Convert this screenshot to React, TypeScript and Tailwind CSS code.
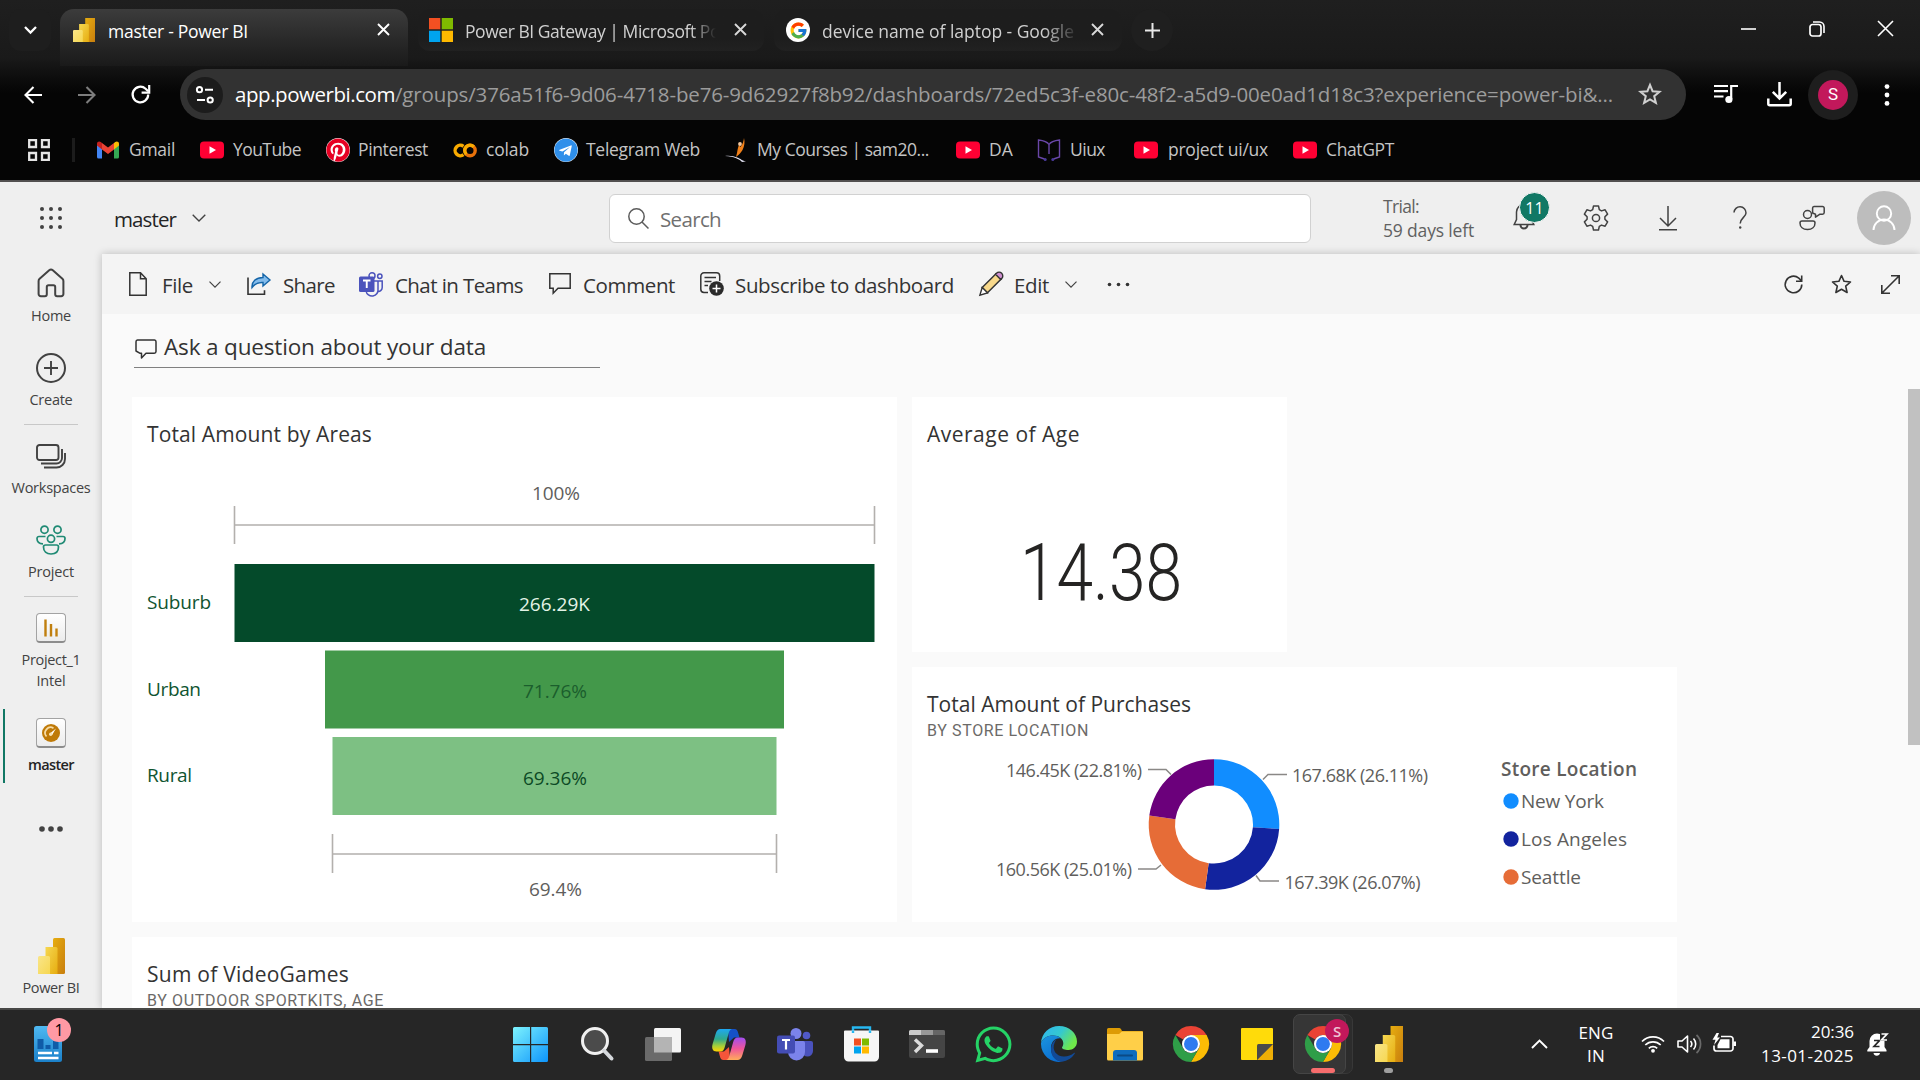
import { useId, useLayoutEffect, useRef, useState, type ReactNode } from 'react';
import { FaPinterest, FaTelegram, FaWhatsapp } from 'react-icons/fa';
import { FcGoogle } from 'react-icons/fc';

/* Text set to a fixed measure: the tracking is computed from the rendered width. */
function Fit({ w, className = '', children }: { w: number; className?: string; children: string }) {
  const ref = useRef<HTMLSpanElement>(null);
  const [spacing, setSpacing] = useState(0);
  useLayoutEffect(() => {
    const el = ref.current;
    if (el) setSpacing((w - el.getBoundingClientRect().width) / children.length);
  }, [w, children]);
  return (
    <span ref={ref} className={`inline-block shrink-0 whitespace-nowrap ${className}`} style={{ letterSpacing: `${spacing}px` }}>
      {children}
    </span>
  );
}

function Svg({ w, h, vb, className = '', children }: { w: number; h: number; vb: string; className?: string; children: ReactNode }) {
  return (
    <svg width={w} height={h} viewBox={vb} fill="none" className={`shrink-0 overflow-visible ${className}`}>
      {children}
    </svg>
  );
}

/* ---------- shared logos ---------- */

function PowerBiLogo({ w, h, flat = false }: { w: number; h: number; flat?: boolean }) {
  const id = useId();
  return (
    <svg width={w} height={h} viewBox="0 0 27 36" preserveAspectRatio="none" className="shrink-0">
      <defs>
        <linearGradient id={`${id}a`} x1="0" y1="0" x2="1" y2="1">
          <stop stopColor="#e6ad10" />
          <stop offset="1" stopColor="#c87e0e" />
        </linearGradient>
        <linearGradient id={`${id}b`} x1="0" y1="0" x2="1" y2="1">
          <stop stopColor="#f6d751" />
          <stop offset="1" stopColor="#e6ad10" />
        </linearGradient>
        <linearGradient id={`${id}c`} x1="0" y1="0" x2="1" y2="1">
          <stop stopColor="#f9e589" />
          <stop offset="1" stopColor="#f6d751" />
        </linearGradient>
      </defs>
      <rect x="15" width="12" height="36" rx={flat ? 0 : 1.5} fill={`url(#${id}a)`} />
      <path d="M7.5 9h10.5a1.5 1.5 0 0 1 1.5 1.5V36H7.5z" fill={`url(#${id}b)`} />
      <path d="M1.5 18h9a1.5 1.5 0 0 1 1.5 1.5V36H0V19.5A1.5 1.5 0 0 1 1.5 18z" fill={`url(#${id}c)`} />
    </svg>
  );
}

function ChromeLogo() {
  return (
    <Svg w={36} h={36} vb="0 0 48 48">
      <path d="M24 0a24 24 0 0 1 20.8 12H24a12 12 0 0 0-10.4 6L3.2 12A24 24 0 0 1 24 0z" fill="#ea4335" />
      <path d="M44.8 12A24 24 0 0 1 24 48l10.4-18A12 12 0 0 0 34.4 18L31 12z" fill="#fbbc05" />
      <path d="M3.2 12A24 24 0 0 0 24 48l10.4-18A12 12 0 0 1 13.6 30z" fill="#2f9e48" />
      <path d="M24 12h20.8L34 20z" fill="#fbbc05" />
      <circle cx="24" cy="24" r="12" fill="#fff" />
      <circle cx="24" cy="24" r="9.3" fill="#2f7af0" />
    </Svg>
  );
}

const CloseX = ({ bright = false }: { bright?: boolean }) => (
  <Svg w={13} h={13} vb="0 0 13 13">
    <path d="M1 1l11 11M12 1L1 12" stroke={bright ? '#fff' : '#d8d8d8'} strokeWidth="1.9" />
  </Svg>
);

const Chevron = ({ w = 12, color = '#424242' }: { w?: number; color?: string }) => (
  <Svg w={w} h={w / 2 + 1} vb="0 0 12 7">
    <path d="M.5.7L6 6.2 11.500.7" stroke={color} strokeWidth="1.2" />
  </Svg>
);

/* ---------- browser chrome ---------- */

function TabStrip() {
  return (
    <div className="flex h-[60px] items-start pt-[9px]">
      <div className="ml-[9px] flex h-[42px] w-[42px] items-center justify-center rounded-xl bg-[#1e1e1e]">
        <Svg w={13} h={8} vb="0 0 13 8">
          <path d="M1 1l5.500 5.500L12 1" stroke="#fff" strokeWidth="2.3" />
        </Svg>
      </div>
      <div className="ml-[9px] flex h-[57px] w-[348px] items-start rounded-t-[14px] bg-linear-to-b from-[#3c3c3c] to-[#1a1a1a] pl-[13px]">
        <div className="mt-[9px]">
          <PowerBiLogo w={22} h={24} flat />
        </div>
        <Fit w={140} className="ml-[13px] mt-[10px] text-[17.500px] leading-6 text-white">master - Power BI</Fit>
        <div className="ml-[129px] mt-[14px]"><CloseX bright /></div>
      </div>
      <div className="ml-[10px] flex h-[42px] w-[346px] items-start rounded-xl bg-linear-to-b from-[#1d1d1d] from-70% to-[#212121] pl-[11px]">
        <Svg w={24} h={24} vb="0 0 24 24" className="mt-[9px]">
          <path d="M0 0h11.300v11.300H0z" fill="#f25022" />
          <path d="M12.700 0H24v11.300H12.700z" fill="#7fba00" />
          <path d="M0 12.700h11.300V24H0z" fill="#00a4ef" />
          <path d="M12.700 12.700H24V24H12.700z" fill="#ffb900" />
        </Svg>
        <div className="ml-[12px] mt-[10px] w-[251px] overflow-hidden [mask-image:linear-gradient(to_right,black_90%,transparent)]">
          <Fit w={255} className="text-[17.500px] leading-6 text-[#d0d0d0]">Power BI Gateway | Microsoft Po</Fit>
        </div>
        <div className="ml-[18px] mt-[14px]"><CloseX /></div>
      </div>
      <div className="ml-[10px] flex h-[42px] w-[348px] items-start rounded-xl bg-linear-to-b from-[#1d1d1d] from-70% to-[#212121] pl-[12px]">
        <div className="mt-[9px] flex h-6 w-6 items-center justify-center rounded-full bg-white">
          <FcGoogle size={19} />
        </div>
        <div className="ml-[12px] mt-[10px] w-[252px] overflow-hidden [mask-image:linear-gradient(to_right,black_88%,transparent_102%)]">
          <Fit w={252} className="text-[17.500px] leading-6 text-[#d0d0d0]">device name of laptop - Google</Fit>
        </div>
        <div className="ml-[17px] mt-[14px]"><CloseX /></div>
      </div>
      <div className="ml-[9px] flex h-[42px] w-[42px] items-center justify-center rounded-full bg-[#1f1f1f]">
        <Svg w={15} h={15} vb="0 0 15 15">
          <path d="M7.500 0v15M0 7.500h15" stroke="#e8e8e8" strokeWidth="2" />
        </Svg>
      </div>
      <div className="ml-auto mr-[27px] mt-[12px] flex gap-[53px]">
        <Svg w={15} h={15} vb="0 0 15 15">
          <path d="M0 8h15" stroke="#fff" strokeWidth="1.600" />
        </Svg>
        <Svg w={16} h={16} vb="0 0 16 16">
          <rect x="1" y="3.500" width="11" height="11.500" rx="2.500" stroke="#fff" strokeWidth="1.700" />
          <path d="M4 1h6.500a4.500 4.500 0 0 1 4.500 4.500V12" stroke="#fff" strokeWidth="1.600" />
        </Svg>
        <Svg w={15} h={15} vb="0 0 15 15">
          <path d="M0 0l15 15M15 0L0 15" stroke="#fff" strokeWidth="1.600" />
        </Svg>
      </div>
    </div>
  );
}

function AddressBar() {
  return (
    <div className="flex h-[51px] items-center">
      <Svg w={18} h={18} vb="0 0 18 18" className="ml-[24px]">
        <path d="M18 9H1.500M9.500 1L1.500 9l8 8" stroke="#fff" strokeWidth="2.100" />
      </Svg>
      <Svg w={18} h={18} vb="0 0 18 18" className="ml-[36px]">
        <path d="M0 9h16.500M8.500 1l8 8-8 8" stroke="#7d7d7d" strokeWidth="2.100" />
      </Svg>
      <Svg w={19} h={19} vb="0 0 19 19" className="ml-[35px]">
        <path d="M17.200 9.500a7.800 7.800 0 1 1-2.600-5.800l2.600 2.600" stroke="#fff" strokeWidth="2.200" />
        <path d="M18.200 0v7.600h-7.600" stroke="#fff" strokeWidth="2.200" />
      </Svg>
      <div className="ml-[30px] flex h-[51px] w-[1506px] items-center rounded-full bg-[#323232]">
        <div className="ml-[7px] flex h-[36px] w-[36px] items-center justify-center rounded-full bg-[#1c1c1c]">
          <Svg w={20} h={18} vb="0 0 20 18">
            <g stroke="#fff" strokeWidth="2">
              <circle cx="4.500" cy="3.700" r="2.600" />
              <path d="M10 3.700h8M2 14h8" />
              <circle cx="15.200" cy="14" r="2.600" />
            </g>
          </Svg>
        </div>
        <Fit w={160} className="mb-[2px] ml-[12px] text-[20.500px] leading-8 text-white">app.powerbi.com</Fit>
        <Fit w={1218} className="mb-[2px] text-[20.500px] leading-8 text-[#9c9c9c]">
          /groups/376a51f6-9d06-4718-be76-9d62927f8b92/dashboards/72ed5c3f-e80c-48f2-a5d9-00e0ad1d18c3?experience=power-bi&...
        </Fit>
        <Svg w={24} h={24} vb="0 0 24 24" className="mb-[2px] ml-[25px]">
          <path d="M12 2.800l2.600 6.400 6.900.5-5.300 4.500 1.700 6.700-5.900-3.600-5.900 3.600 1.700-6.700L2.500 9.700l6.900-.5z" stroke="#d0d0d0" strokeWidth="2" />
        </Svg>
      </div>
      <Svg w={24} h={20} vb="0 0 24 20" className="ml-[28px] mt-[-2px]">
        <path d="M0 2h14M0 7.200h14M0 12.500h9.500M24 2h-6.800v13" stroke="#fff" strokeWidth="2.200" />
        <circle cx="14.900" cy="15.500" r="3.600" fill="#fff" />
      </Svg>
      <Svg w={25} h={25} vb="0 0 25 25" className="ml-[29px]">
        <path d="M12.500 0v16M5.800 9.800l6.700 6.700 6.700-6.700M1.300 16.500v5.300a1.500 1.500 0 0 0 1.500 1.500h19.400a1.500 1.500 0 0 0 1.500-1.500v-5.300" stroke="#fff" strokeWidth="2.500" />
      </Svg>
      <div className="ml-[16px] flex h-[50px] w-[50px] items-center justify-center rounded-full bg-[#1e1e1e]">
        <div className="flex h-[30px] w-[30px] items-center justify-center rounded-full bg-[#c2185b] font-[Roboto] text-[17px] text-white">S</div>
      </div>
      <Svg w={6} h={22} vb="0 0 6 22" className="ml-[26px]">
        <g fill="#fff">
          <circle cx="3" cy="2.600" r="2.400" />
          <circle cx="3" cy="11" r="2.400" />
          <circle cx="3" cy="19.400" r="2.400" />
        </g>
      </Svg>
    </div>
  );
}

const YouTubeIcon = () => (
  <Svg w={24} h={18} vb="0 0 24 18">
    <rect y=".5" width="24" height="17" rx="4" fill="#ff0033" />
    <path d="M9.500 5.300v7.400L16 9z" fill="#fff" />
  </Svg>
);

const GmailIcon = () => (
  <Svg w={22} h={18} vb="0 0 22 17">
    <path d="M0 3v12.500A1.500 1.500 0 0 0 1.500 17H5V7z" fill="#4285f4" />
    <path d="M22 3v12.500a1.500 1.500 0 0 1-1.500 1.500H17V7z" fill="#34a853" />
    <path d="M17 1.500V8l5-4V2.200C22 .2 19.800-.7 18.200.5z" fill="#fbbc04" />
    <path d="M5 8V1.500L11 6l6-4.500V8l-6 4.600z" fill="#ea4335" />
    <path d="M0 2.200V4l5 4V1.500L3.800.5C2.200-.7 0 .2 0 2.200z" fill="#c5221f" />
  </Svg>
);

const bookmarks: { label: string; w: number; gap: number; pad: number; icon: ReactNode }[] = [
  { label: 'Gmail', w: 46, gap: 22, pad: 10, icon: <GmailIcon /> },
  { label: 'YouTube', w: 68, gap: 25, pad: 9, icon: <YouTubeIcon /> },
  { label: 'Pinterest', w: 70, gap: 25, pad: 8, icon: <span className="rounded-full bg-white"><FaPinterest size={24} color="#e60023" /></span> },
  {
    label: 'colab', w: 43, gap: 25, pad: 9,
    icon: (
      <Svg w={24} h={15} vb="0 0 24 15">
        <path d="M10.500 3.400A5.200 5.200 0 1 0 10.500 11.600" stroke="#f9ab00" strokeWidth="3.400" />
        <circle cx="17" cy="7.500" r="5.200" stroke="#e8710a" strokeWidth="3.400" />
        <path d="M13.300 11.200a5.200 5.200 0 0 1 7.400-7.400" stroke="#f9ab00" strokeWidth="3.400" />
      </Svg>
    ),
  },
  { label: 'Telegram Web', w: 114, gap: 25, pad: 8, icon: <span className="rounded-full bg-white"><FaTelegram size={24} color="#2f8fea" /></span> },
  {
    label: 'My Courses | sam20...', w: 172, gap: 25, pad: 10,
    icon: (
      <Svg w={22} h={24} vb="0 0 22 24">
        <path d="M19 0c1 4 .5 8-1.500 12-1.200 2.500-4 5-6.500 7l1-4c.5-3 .8-5 2-8l1.500 2C18 6 18.500 3 19 0z" fill="#f08019" />
        <circle cx="15" cy="6" r="1.900" fill="#f3c9a0" />
        <path d="M0 18c4-.6 9 0 13 1.800s5 3.400 8 3.700l-4 .4c-3-2.800-8-5.400-17-5.900z" fill="#e4e4f4" />
      </Svg>
    ),
  },
  { label: 'DA', w: 24, gap: 27, pad: 9, icon: <YouTubeIcon /> },
  {
    label: 'Uiux', w: 35, gap: 24, pad: 9,
    icon: (
      <Svg w={24} h={22} vb="0 0 24 22">
        <path d="M12 5.500C10.500 3 6.500 1.500 1.500 1v17l6 2M12 5.500c1.500-2.500 5.500-4 10.500-4.500v17l-6 2M12 4.500V15" stroke="#6a47a8" strokeWidth="1.400" />
        <circle cx="8.200" cy="20.500" r="1.500" fill="#4a3a9a" />
        <circle cx="15.800" cy="20.500" r="1.500" fill="#4a3a9a" />
      </Svg>
    ),
  },
  { label: 'project ui/ux', w: 100, gap: 29, pad: 10, icon: <YouTubeIcon /> },
  { label: 'ChatGPT', w: 68, gap: 25, pad: 9, icon: <YouTubeIcon /> },
];

function BookmarksBar() {
  return (
    <div className="flex h-[60px] items-center">
      <Svg w={22} h={22} vb="0 0 22 22" className="ml-[28px]">
        <path d="M1.200 1.200h6.800V8H1.200zM14 1.200h6.800V8H14zM1.200 14h6.800v6.800H1.200zM14 14h6.800v6.800H14z" stroke="#e4e4e4" strokeWidth="2.300" />
      </Svg>
      <div className="ml-[22px] h-6 w-[3px] bg-[#1c1c1c]" />
      {bookmarks.map((b, i) => (
        <div key={i} className="flex items-center">
          <span style={{ width: b.gap }} />
          {b.icon}
          <span style={{ width: b.pad }} />
          <Fit w={b.w} className="mb-[2px] text-[17.500px] leading-6 text-[#c4c4c4]">{b.label}</Fit>
        </div>
      ))}
    </div>
  );
}

/* ---------- Power BI header ---------- */

function AppHeader() {
  return (
    <header className="flex h-[74px] shrink-0 items-center border-t-2 border-[#525050] bg-[#efefef]">
      <Svg w={22} h={22} vb="0 0 22 22" className="ml-[40px]">
        <g fill="#424242">
          {[2, 11, 20].map((y) => [2, 11, 20].map((x) => <circle key={`${x}-${y}`} cx={x} cy={y} r="2" />))}
        </g>
      </Svg>
      <Fit w={62} className="ml-[52px] mt-[2px] text-[20.500px] leading-7 text-[#242424]">master</Fit>
      <div className="ml-[16px]"><Chevron w={14} /></div>
      <div className="ml-[403px] flex h-[49px] w-[702px] items-center rounded-[6px] border-[1.500px] border-[#d1d1d1] bg-white">
        <Svg w={21} h={21} vb="0 0 21 21" className="ml-[18px]">
          <circle cx="8.500" cy="8.500" r="7.700" stroke="#5c5c5c" strokeWidth="1.500" />
          <path d="M14 14l6.500 6.500" stroke="#5c5c5c" strokeWidth="1.500" />
        </Svg>
        <Fit w={61} className="ml-[11px] mt-[2px] text-[20.500px] leading-7 text-[#707070]">Search</Fit>
      </div>
      <div className="ml-[72px] flex w-[120px] flex-col text-[17.500px] leading-6 text-[#616161]">
        <Fit w={36} className="self-start">Trial:</Fit>
        <Fit w={91} className="self-start">59 days left</Fit>
      </div>
      <div className="relative ml-[10px] h-[30px] w-[24px]">
        <Svg w={22} h={28} vb="0 0 22 28">
          <path d="M11 1.500A7.500 7.500 0 0 0 3.500 9v7.500L1.200 21.500h19.600l-2.300-5V9A7.500 7.500 0 0 0 11 1.500z" stroke="#424242" strokeWidth="1.500" />
          <path d="M7.500 22a3.500 3.500 0 0 0 7 0" stroke="#424242" strokeWidth="2" />
        </Svg>
        <div className="absolute left-[6px] top-[-11px] flex h-[31px] w-[31px] items-center justify-center rounded-full border-[1.500px] border-[#f4f4f4] bg-[#117865] text-[16px] text-white">
          11
        </div>
      </div>
      <Svg w={26} h={26} vb="0 0 26 26" className="ml-[46px]">
        <path d="M10.500 1h5l.8 3.600 2.200 1.300 3.600-1.100 2.500 4.300-2.700 2.600v2.600l2.700 2.600-2.500 4.300-3.600-1.100-2.200 1.300-.8 3.600h-5l-.8-3.600-2.200-1.300-3.600 1.100-2.500-4.300 2.700-2.600v-2.600L1.400 9.100l2.500-4.300 3.600 1.100 2.200-1.300z" stroke="#424242" strokeWidth="1.500" strokeLinejoin="round" />
        <circle cx="13" cy="13" r="3.600" stroke="#424242" strokeWidth="1.500" />
      </Svg>
      <Svg w={20} h={26} vb="0 0 20 26" className="ml-[49px]">
        <path d="M10 1v19M2 13l8 8 8-8M1 24.700h18" stroke="#424242" strokeWidth="1.500" />
      </Svg>
      <Svg w={14} h={24} vb="0 0 14 24" className="ml-[55px]">
        <path d="M1 6.500A6 6 0 0 1 13 7c0 4-5.800 5-5.800 10.500" stroke="#424242" strokeWidth="1.500" />
        <circle cx="7.200" cy="21.500" r="1.200" fill="#424242" />
      </Svg>
      <Svg w={26} h={26} vb="0 0 26 26" className="ml-[52px]">
        <g stroke="#424242" strokeWidth="1.500" strokeLinejoin="round">
          <circle cx="8.500" cy="9.500" r="4" />
          <path d="M3 16h11a2 2 0 0 1 2 2c0 4-3 6.500-7.500 6.500S1 22 1 18a2 2 0 0 1 2-2zM15 1.500h8.500a1.700 1.700 0 0 1 1.700 1.700v4.300a1.700 1.700 0 0 1-1.700 1.700H21l-4.500 3V9.200L13.600 8V3a1.500 1.500 0 0 1 1.400-1.500z" />
        </g>
      </Svg>
      <div className="ml-[32px] flex h-[54px] w-[54px] items-center justify-center rounded-full bg-[#bdbdbd]">
        <Svg w={24} h={26} vb="0 0 24 26">
          <circle cx="12" cy="8.500" r="7.200" stroke="#fff" strokeWidth="1.900" />
          <path d="M1.500 25a10.500 10.500 0 0 1 21 0" stroke="#fff" strokeWidth="1.900" />
        </Svg>
      </div>
    </header>
  );
}

/* ---------- left navigation ---------- */

function NavLabel({ w, bold = false, className = '', children }: { w: number; bold?: boolean; className?: string; children: string }) {
  return (
    <div className={`flex h-[21px] justify-center ${className}`}>
      <Fit w={w} className={bold ? 'text-[14.500px] font-semibold leading-[21px] text-[#242424]' : 'text-[14.500px] leading-[21px] text-[#424242]'}>
        {children}
      </Fit>
    </div>
  );
}

function Tile({ children }: { children: ReactNode }) {
  return (
    <div className="flex h-[30px] w-[30px] items-center justify-center rounded-[4px] border border-b-2 border-[#a3a3a3] border-b-[#8c8c8c] bg-linear-to-b from-white to-[#ececec]">
      {children}
    </div>
  );
}

function Sidebar() {
  return (
    <nav className="flex w-[102px] shrink-0 flex-col items-center bg-[#efefef]">
      <Svg w={28} h={30} vb="0 0 28 30" className="mt-[14px]">
        <path d="M12.200 2.300a2.700 2.700 0 0 1 3.600 0l9.600 8.500c.7.600 1 1.300 1 2.200V26a2.200 2.200 0 0 1-2.200 2.200h-4a2 2 0 0 1-2-2V19a1.700 1.700 0 0 0-1.700-1.700h-5A1.700 1.700 0 0 0 9.800 19v7.200a2 2 0 0 1-2 2h-4A2.200 2.200 0 0 1 1.600 26V13c0-.9.300-1.600 1-2.200z" stroke="#424242" strokeWidth="2" />
      </Svg>
      <NavLabel w={40} className="mt-[7px]">Home</NavLabel>
      <Svg w={30} h={30} vb="0 0 30 30" className="mt-[27px]">
        <circle cx="15" cy="15" r="14" stroke="#424242" strokeWidth="2" />
        <path d="M15 8v14M8 15h14" stroke="#424242" strokeWidth="1.900" />
      </Svg>
      <NavLabel w={43} className="mt-[6px]">Create</NavLabel>
      <div className="mt-[14px] h-px w-[54px] bg-[#c8c8c8]" />
      <Svg w={30} h={25} vb="0 0 30 25" className="mt-[19px]">
        <rect x="1" y="1" width="21.500" height="15" rx="2.500" stroke="#424242" strokeWidth="1.900" />
        <path d="M5 19.500h15.500a5.500 5.500 0 0 0 5.500-5.500V5M8 23.500h12.500a8.500 8.500 0 0 0 8.500-8.500V9" stroke="#424242" strokeWidth="1.900" />
      </Svg>
      <NavLabel w={79} className="mt-[8px]">Workspaces</NavLabel>
      <Svg w={30} h={30} vb="0 0 30 30" className="mt-[27px]">
        <g stroke="#1f8a74" strokeWidth="1.700">
          <circle cx="8.500" cy="4.700" r="3.600" />
          <circle cx="21.500" cy="4.700" r="3.600" />
          <circle cx="15" cy="13.800" r="3.600" />
          <path d="M9.500 11.500H3A2 2 0 0 0 1 13.500C1 17 3.500 18.800 7 18.800M20.500 11.500H27a2 2 0 0 1 2 2c0 3.500-2.500 5.300-6 5.300M9.500 20h11a2 2 0 0 1 2 2c0 4.500-3 7-7.500 7s-7.500-2.500-7.500-7a2 2 0 0 1 2-2z" />
        </g>
      </Svg>
      <NavLabel w={46} className="mt-[6px]">Project</NavLabel>
      <div className="mt-[14px] h-px w-[54px] bg-[#c8c8c8]" />
      <div className="mt-[16px]">
        <Tile>
          <Svg w={16} h={20} vb="0 0 16 20">
            <path d="M2.500 1.500v17M8 6v12.500M13.500 10.500v8" stroke="#c07f0e" strokeWidth="2.400" />
          </Svg>
        </Tile>
      </div>
      <NavLabel w={59} className="mt-[6px]">Project_1</NavLabel>
      <NavLabel w={29}>Intel</NavLabel>
      <div className="relative mt-[18px] flex h-[74px] w-full flex-col items-center">
        <div className="absolute left-[3px] top-0 h-[74px] w-[2px] bg-[#117865]" />
        <div className="mt-[9px]">
          <Tile>
            <Svg w={18} h={18} vb="0 0 18 18">
              <circle cx="9" cy="9" r="9" fill="#bf7a08" />
              <path d="M4.500 12.500A5.500 5.500 0 0 1 11.500 4.200" stroke="#f7dca6" strokeWidth="1.700" />
              <path d="M14 4.500l-4 6.500-2-1.600z" fill="#fff" />
              <circle cx="8.700" cy="10.200" r="1.700" fill="#f9e3b4" />
            </Svg>
          </Tile>
        </div>
        <NavLabel w={46} bold className="mt-[6px]">master</NavLabel>
      </div>
      <Svg w={24} h={6} vb="0 0 24 6" className="mt-[43px]">
        <g fill="#424242">
          <circle cx="3" cy="3" r="2.800" />
          <circle cx="12" cy="3" r="2.800" />
          <circle cx="21" cy="3" r="2.800" />
        </g>
      </Svg>
      <div className="mt-auto"><PowerBiLogo w={27} h={36} /></div>
      <NavLabel w={57} className="mb-[10px] mt-[3px]">Power BI</NavLabel>
    </nav>
  );
}

/* ---------- dashboard toolbar ---------- */

function ToolLabel({ w, children }: { w: number; children: string }) {
  return <Fit w={w} className="-ml-px mr-px mt-px text-[20.500px] leading-7 text-[#333]">{children}</Fit>;
}

function DashboardToolbar() {
  return (
    <div className="flex h-[60px] shrink-0 items-center bg-[#f4f4f4]">
      <Svg w={18} h={24} vb="0 0 18 24" className="ml-[27px]">
        <path d="M.8.8h10.700l5.700 6v16.400H.8zM11.500.8v6h5.700" stroke="#333" strokeWidth="1.500" />
      </Svg>
      <div className="ml-[16px]"><ToolLabel w={31}>File</ToolLabel></div>
      <div className="ml-[15px]"><Chevron /></div>
      <Svg w={24} h={22} vb="0 0 24 22" className="ml-[26px]">
        <path d="M1 4.500v16.700h16.500v-4" stroke="#333" strokeWidth="1.600" />
        <path d="M16 1l7 6-7 6V9.500c-5-.3-8.500 1.500-11 5C4.500 8.500 9 4.500 16 4.500z" fill="#83bcec" stroke="#1565a8" strokeWidth="1.400" />
      </Svg>
      <div className="ml-[13px]"><ToolLabel w={52}>Share</ToolLabel></div>
      <Svg w={24} h={24} vb="0 0 24 24" className="ml-[23px]">
        <circle cx="13" cy="3.800" r="3" stroke="#4b53bc" strokeWidth="1.500" />
        <circle cx="20.800" cy="4.200" r="2.200" stroke="#4b53bc" strokeWidth="1.500" />
        <path d="M7 9h12v8a6 6 0 0 1-12 2zM19 9h4.200v6.500a4 4 0 0 1-4.200 4" stroke="#4b53bc" strokeWidth="1.500" />
        <rect y="4.500" width="15.500" height="15.500" rx="1.500" fill="#4b53bc" />
        <path d="M4 8.500h7.500M7.750 8.500V16" stroke="#fff" strokeWidth="1.900" />
      </Svg>
      <div className="ml-[13px]"><ToolLabel w={128}>Chat in Teams</ToolLabel></div>
      <Svg w={22} h={22} vb="0 0 22 22" className="ml-[25px]">
        <path d="M.8.8h20.400v14.500H9L4.200 20.200v-4.900H.8z" stroke="#333" strokeWidth="1.500" />
      </Svg>
      <div className="ml-[13px]"><ToolLabel w={92}>Comment</ToolLabel></div>
      <Svg w={24} h={24} vb="0 0 24 24" className="ml-[24px]">
        <path d="M8 20.500H4A3.200 3.200 0 0 1 .8 17.300V4A3.200 3.200 0 0 1 4 .8h12.500A3.200 3.200 0 0 1 19.700 4v5M4.500 5.500h11.500M4.500 9.500h7M4.500 13.500h3.500" stroke="#333" strokeWidth="1.500" />
        <circle cx="16.500" cy="16.500" r="7.300" fill="#2b2b2b" />
        <path d="M16.500 12.500v8M12.500 16.500h8" stroke="#fff" strokeWidth="1.500" />
      </Svg>
      <div className="ml-[12px]"><ToolLabel w={219}>Subscribe to dashboard</ToolLabel></div>
      <Svg w={24} h={24} vb="0 0 24 24" className="ml-[24px]">
        <path d="M3.200 15.500L17 1.800l5.200 5.200L8.500 20.800z" fill="#f8d98b" stroke="#333" strokeWidth="1.500" />
        <path d="M16.500 2.300l1-1a3.300 3.300 0 0 1 5.200 5.200l-1 1z" fill="#cf8fd0" stroke="#333" strokeWidth="1.400" />
        <path d="M3.200 15.500L.9 23.100l7.600-2.300z" fill="#fff" stroke="#333" strokeWidth="1.400" />
      </Svg>
      <div className="ml-[12px]"><ToolLabel w={35}>Edit</ToolLabel></div>
      <div className="ml-[15px]"><Chevron /></div>
      <Svg w={23} h={5} vb="0 0 23 5" className="ml-[30px]">
        <g fill="#333">
          <circle cx="2.500" cy="2.500" r="1.800" />
          <circle cx="11.500" cy="2.500" r="1.800" />
          <circle cx="20.500" cy="2.500" r="1.800" />
        </g>
      </Svg>
      <Svg w={19} h={19} vb="0 0 19 19" className="ml-auto mr-[28px]">
        <path d="M17.800 9.500a8.300 8.300 0 1 1-3-6.400l2.600 2.700M17.700.5v5.700H12" stroke="#333" strokeWidth="1.600" />
      </Svg>
      <Svg w={21} h={20} vb="0 0 21 20" className="mr-[29px]">
        <path d="M10.500 1.500l2.600 5.800 6.400.7-4.800 4.200 1.400 6.300-5.600-3.200-5.600 3.200 1.400-6.300L1.500 8l6.400-.7z" stroke="#333" strokeWidth="1.600" strokeLinejoin="round" />
      </Svg>
      <Svg w={19} h={19} vb="0 0 19 19" className="mr-[20px]">
        <path d="M1 18L18 1M10 .8h8.200V9M.8 10v8.200H9" stroke="#333" strokeWidth="1.600" />
      </Svg>
    </div>
  );
}

/* ---------- tiles ---------- */

function FunnelChart() {
  return (
    <svg width="765" height="473" viewBox="0 52 765 473" fontFamily="'Open Sans', sans-serif" fontSize="19">
      <g stroke="#b3b0ad" strokeWidth="1.600">
        <path d="M102.500 109v38M742.500 109v38M102.500 128h640" />
        <path d="M200.500 437v39M644.500 437v39M200.500 457h444" />
      </g>
      <rect x="102.500" y="167" width="640" height="78" fill="#044a2a" />
      <rect x="193" y="253.500" width="459" height="78" fill="#43984a" />
      <rect x="200.500" y="340" width="444" height="78" fill="#7dc083" />
      <g fill="#605e5c">
        <text x="400" y="103" textLength="48">100%</text>
        <text x="397" y="499" textLength="53">69.4%</text>
      </g>
      <g fill="#0f5430">
        <text x="15" y="212" textLength="64">Suburb</text>
        <text x="15" y="299" textLength="54">Urban</text>
        <text x="15" y="385" textLength="45">Rural</text>
      </g>
      <text x="387" y="214" textLength="71" fill="#e3f3e6">266.29K</text>
      <text x="391" y="301" textLength="64" fill="#1b5e2d">71.76%</text>
      <text x="391" y="388" textLength="64" fill="#0c4a25">69.36%</text>
    </svg>
  );
}

const slices = [
  { share: 26.11, color: '#118dff' },
  { share: 26.07, color: '#12239e' },
  { share: 25.01, color: '#e66c37' },
  { share: 22.81, color: '#6b007b' },
];

function ringSlice(from: number, to: number) {
  const pt = (r: number, t: number) => `${302 + r * Math.sin(t * 2 * Math.PI)} ${157.5 - r * Math.cos(t * 2 * Math.PI)}`;
  return `M${pt(65.300, from)}A65.300 65.300 0 0 1 ${pt(65.300, to)}L${pt(39, to)}A39 39 0 0 0 ${pt(39, from)}Z`;
}

function DonutChart() {
  let start = 0;
  return (
    <svg width="765" height="179" viewBox="0 76 765 179" fontFamily="'Open Sans', sans-serif">
      {slices.map((s) => {
        const from = start;
        start += s.share / 100;
        return <path key={s.color} d={ringSlice(from, start)} fill={s.color} />;
      })}
      <path d="M236 102.500h18l5 5M351 112.500l5-5h19M226 202h18l5-4M344 208.500l4 5.500h19" fill="none" stroke="#8a8886" strokeWidth="1.500" />
      <g fill="#605e5c" fontSize="18">
        <text x="94" y="110" textLength="136">146.45K (22.81%)</text>
        <text x="380" y="115" textLength="136">167.68K (26.11%)</text>
        <text x="84" y="209" textLength="136">160.56K (25.01%)</text>
        <text x="372.500" y="222" textLength="136">167.39K (26.07%)</text>
      </g>
      <text x="589" y="109" fontSize="19" fontWeight="600" fill="#605e5c" textLength="136">Store Location</text>
      <g fill="#605e5c" fontSize="19">
        <circle cx="599" cy="134" r="7.700" fill="#118dff" />
        <text x="609" y="141" textLength="83">New York</text>
        <circle cx="599" cy="172" r="7.700" fill="#12239e" />
        <text x="609" y="179" textLength="106">Los Angeles</text>
        <circle cx="599" cy="210" r="7.700" fill="#e66c37" />
        <text x="609" y="217" textLength="60">Seattle</text>
      </g>
    </svg>
  );
}

function CardTile({ title, titleW, sub, subW = 0, className = '', children }: {
  title: string; titleW: number; sub?: string; subW?: number; className?: string; children?: ReactNode;
}) {
  return (
    <section className={`flex flex-col bg-white pt-[22px] ${className}`}>
      <h2 className="flex h-[30px] items-center pl-[15px] pt-[2px] text-[21px] text-[#333]">
        <Fit w={titleW}>{title}</Fit>
      </h2>
      {sub && (
        <h3 className="flex h-[24px] items-center pl-[15px] font-[Roboto] text-[16px] text-[#6c6a68]">
          <Fit w={subW}>{sub}</Fit>
        </h3>
      )}
      {children}
    </section>
  );
}

function Dashboard() {
  return (
    <div className="flex min-h-0 flex-1 overflow-hidden bg-[#fafafa]">
      <div className="min-w-0 flex-1">
        <div className="ml-[32px] mt-[14px] flex h-[40px] w-[466px] items-center border-b-[1.500px] border-[#808080]">
          <Svg w={22} h={20} vb="0 0 22 20" className="ml-px mt-[3px]">
            <path d="M2.500 1h17A1.700 1.700 0 0 1 21 2.700v9.800a1.700 1.700 0 0 1-1.700 1.700H11L6.500 19v-4.800H4.700L1 12V2.700A1.700 1.700 0 0 1 2.500 1z" stroke="#333" strokeWidth="1.500" strokeLinejoin="round" />
          </Svg>
          <Fit w={322} className="-mt-px ml-[7px] text-[22.500px] leading-8 text-[#333]">Ask a question about your data</Fit>
        </div>
        <div className="ml-[30px] mt-[29px] grid grid-cols-[765px_375px_375px] grid-rows-[255px_255px_255px] gap-[15px]">
          <CardTile title="Total Amount by Areas" titleW={225} className="row-span-2">
            <FunnelChart />
          </CardTile>
          <CardTile title="Average of Age" titleW={153}>
            <svg width="375" height="203" viewBox="0 52 375 203">
              <text x="108" y="203" fontFamily="Roboto, sans-serif" fontWeight="300" fontSize="80" fill="#252423" textLength="162" lengthAdjust="spacingAndGlyphs">14.38</text>
            </svg>
          </CardTile>
          <CardTile title="Total Amount of Purchases" titleW={264} sub="BY STORE LOCATION" subW={162} className="col-span-2 col-start-2">
            <DonutChart />
          </CardTile>
          <CardTile title="Sum of VideoGames" titleW={202} sub="BY OUTDOOR SPORTKITS, AGE" subW={237} className="col-span-3" />
        </div>
      </div>
      <div className="mt-[75px] h-[356px] w-[12px] bg-[#c1c1c1]" />
    </div>
  );
}

/* ---------- taskbar ---------- */

const Cell = ({ children }: { children: ReactNode }) => (
  <div className="relative flex h-full w-[66px] shrink-0 items-center justify-center">{children}</div>
);

function TaskbarApps() {
  return (
    <div className="flex h-full">
      <Cell>
        <Svg w={35} h={35} vb="0 0 35 35" className="mr-[2px]">
          <defs>
            <linearGradient id="win" x1="0" y1="0" x2="35" y2="35" gradientUnits="userSpaceOnUse">
              <stop stopColor="#7df3fd" />
              <stop offset="1" stopColor="#0d94fb" />
            </linearGradient>
          </defs>
          <path d="M1.500 0H17v17H0V1.500A1.500 1.500 0 0 1 1.500 0zM18.200 0h15.300A1.500 1.500 0 0 1 35 1.500V17H18.200zM0 18.200h17V35H1.500A1.500 1.500 0 0 1 0 33.500zM18.200 18.200H35v15.300a1.500 1.500 0 0 1-1.500 1.500H18.200z" fill="url(#win)" />
        </Svg>
      </Cell>
      <Cell>
        <Svg w={33} h={34} vb="0 0 33 34">
          <circle cx="14" cy="14" r="12.500" fill="#4b4b4b" stroke="#f0f0f0" strokeWidth="3" />
          <path d="M23 23.500l7.500 8" stroke="#d5d8dc" strokeWidth="4" strokeLinecap="round" />
        </Svg>
      </Cell>
      <Cell>
        <Svg w={36} h={33} vb="0 0 36 33">
          <rect x="9" width="27" height="24.500" rx="1.500" fill="#f4f4f4" />
          <rect y="9" width="27" height="24" rx="1.500" fill="#6a6a6a" />
          <path d="M9 9h18v15.500H9z" fill="#b4b4b4" />
        </Svg>
      </Cell>
      <Cell>
        <Svg w={34} h={31} vb="0 0 34 31">
          <defs>
            <linearGradient id="cpA" x1="0" y1="0" x2="0" y2="1">
              <stop stopColor="#1ea7f2" />
              <stop offset=".45" stopColor="#2fa98c" />
              <stop offset=".75" stopColor="#a4cf3a" />
              <stop offset="1" stopColor="#ffd200" />
            </linearGradient>
            <linearGradient id="cpB" x1="0" y1="0" x2="0" y2="1">
              <stop stopColor="#a14df0" />
              <stop offset=".5" stopColor="#f0569a" />
              <stop offset="1" stopColor="#ffac5a" />
            </linearGradient>
          </defs>
          <path d="M16 0h6.500c2.300 0 3 1.500 3.700 4l1.300 4.500h-5.500L17 13z" fill="#1551c8" />
          <path d="M18 31h-6.500c-2.300 0-3-1.500-3.700-4l-1.200-4.500H12L17 18z" fill="#f4553a" />
          <path d="M8.500 0H20c-2 .5-2.700 2-3.400 4.500L12.800 18c-.9 3-2 4.500-4.600 4.500H4.500C.5 22.500-.5 19 .6 15L3.600 5C4.600 1.500 6 0 8.500 0z" fill="url(#cpA)" />
          <path d="M25.500 31H14c2-.5 2.700-2 3.400-4.500L21.200 13c.9-3 2-4.500 4.600-4.500h3.700c4 0 5 3.500 3.900 7.500l-3 10c-1 3.500-2.400 5-4.900 5z" fill="url(#cpB)" />
        </Svg>
      </Cell>
      <Cell>
        <Svg w={36} h={33} vb="0 0 36 33">
          <circle cx="29.500" cy="7.500" r="3.800" fill="#5059c9" />
          <path d="M25 13h9a2 2 0 0 1 2 2v8a5.500 5.500 0 0 1-11 0z" fill="#4a52bd" />
          <circle cx="19" cy="5.500" r="5.500" fill="#7b83eb" />
          <path d="M11 13h15a2 2 0 0 1 2 2v9a8.500 8.500 0 0 1-17 0z" fill="#7b83eb" />
          <rect y="7.500" width="18" height="18" rx="2" fill="#444db5" />
          <path d="M5 12h8M9 12v9.500" stroke="#fff" strokeWidth="2.200" />
        </Svg>
      </Cell>
      <Cell>
        <Svg w={35} h={36} vb="0 0 35 36">
          <path d="M9 7V1.500h17V7" stroke="#26b7f0" strokeWidth="2.400" />
          <path d="M1 4.500h33a1 1 0 0 1 1 1V31a4.500 4.500 0 0 1-4.500 4.500h-26A4.500 4.500 0 0 1 0 31V5.500a1 1 0 0 1 1-1z" fill="#f6f6f6" />
          <path d="M9 4.500V7M26 4.500V7" stroke="#26b7f0" strokeWidth="2.400" />
          <path d="M10 12.500h7v7h-7z" fill="#f25022" />
          <path d="M18 12.500h7v7h-7z" fill="#7fba00" />
          <path d="M10 20.500h7v7h-7z" fill="#00a4ef" />
          <path d="M18 20.500h7v7h-7z" fill="#ffb900" />
        </Svg>
      </Cell>
      <Cell>
        <Svg w={36} h={28} vb="0 0 36 28">
          <rect width="36" height="28" rx="2" fill="#454545" />
          <path d="M1.500 0H12v5H0V1.500A1.500 1.500 0 0 1 1.500 0z" fill="#cccccc" />
          <path d="M12 0h12v5H12z" fill="#999" />
          <path d="M24 0h10.500A1.500 1.500 0 0 1 36 1.500V5H24z" fill="#666" />
          <path d="M6 9.500l6.500 6L6 22" stroke="#dcdcdc" strokeWidth="3.400" />
          <path d="M17 21h12" stroke="#fff" strokeWidth="3.600" />
        </Svg>
      </Cell>
      <Cell><FaWhatsapp size={41} color="#25d366" /></Cell>
      <Cell>
        <Svg w={36} h={36} vb="0 0 36 36">
          <defs>
            <linearGradient id="edA" x1="0" y1="0" x2="1" y2=".5">
              <stop stopColor="#2eb4f3" />
              <stop offset=".55" stopColor="#35c8cf" />
              <stop offset="1" stopColor="#6fe84a" />
            </linearGradient>
            <linearGradient id="edB" x1="0" y1="0" x2=".6" y2="1">
              <stop stopColor="#1b95e0" />
              <stop offset="1" stopColor="#0b6ed0" />
            </linearGradient>
          </defs>
          <path d="M0 17C.5 7 8.500 0 18 0c10.500 0 18 7.500 18 15.500C36 21 32 24 27.500 24c-4 0-6.500-1-6.500-2.500 0-.8 1.300-1.500 1.300-4C22.300 13 18 9.500 12 9.500 6.500 9.500 2 12 0 17z" fill="url(#edA)" />
          <path d="M0 17c2-5 6.500-7.500 12-7.500 3.500 0 6.300 1.200 8 3-6-1-10.500 4-10 10.500.4 6.500 5 12 11 12.700A18 18 0 0 1 0 18z" fill="url(#edB)" />
          <path d="M13.500 17c-3 7 2 13.500 9.500 13.500 4 0 7.500-1.500 10-3.500.6-.4 1.100.1.700.7A18 18 0 0 1 21 35.700C14 35.500 10 29.500 10 23.500c0-5 2.500-9 6-10.500-1.300 1-2 2.500-2.500 4z" fill="#124a96" />
        </Svg>
      </Cell>
      <Cell>
        <Svg w={36} h={33} vb="0 0 36 33">
          <path d="M0 1.500A1.500 1.500 0 0 1 1.500 0h10.800c1 0 2 1 2.700 3h20a1 1 0 0 1 1 1v5H0z" fill="#dd9b05" />
          <path d="M0 6h12l3-2.500h20a1 1 0 0 1 1 1V31a1.500 1.500 0 0 1-1.500 1.500h-33A1.500 1.500 0 0 1 0 31z" fill="#ffcf48" />
          <path d="M6 32.500V25a3 3 0 0 1 3-3h18a3 3 0 0 1 3 3v7.500z" fill="#0f6cbd" />
          <path d="M11 27.500h14" stroke="#0b4a86" strokeWidth="2" strokeLinecap="round" />
        </Svg>
      </Cell>
      <Cell><ChromeLogo /></Cell>
      <Cell>
        <Svg w={32} h={32} vb="0 0 32 32">
          <path d="M1 0h30a1 1 0 0 1 1 1v15L16 32H1a1 1 0 0 1-1-1V1a1 1 0 0 1 1-1z" fill="#ffdb0a" />
          <path d="M16 32h15a1 1 0 0 0 1-1V16z" fill="#eeae06" />
          <path d="M16 32V17.500a1.500 1.500 0 0 1 1.500-1.500H32z" fill="#4a4a4a" />
        </Svg>
      </Cell>
      <Cell>
        <div className="absolute left-[8px] top-[4px] h-[60px] w-[55px] rounded-[7px] border border-[#383838] bg-[#2c2c2c]" />
        <div className="absolute left-[3px] top-[4px] h-[60px] w-[53px] rounded-[7px] border border-[#454545] bg-[#363636]" />
        <div className="relative"><ChromeLogo /></div>
        <div className="absolute left-[35px] top-[9px] flex h-6 w-6 items-center justify-center rounded-full bg-[#c2185b] text-[15px] font-semibold text-[#f0c4d4]">S</div>
        <div className="absolute bottom-[5px] left-[21px] h-[5px] w-6 rounded-full bg-[#f76d6d]" />
      </Cell>
      <Cell>
        <PowerBiLogo w={28} h={36} flat />
        <div className="absolute bottom-[5px] left-[28px] h-[5px] w-[9px] rounded-full bg-[#9e9e9e]" />
      </Cell>
    </div>
  );
}

function Taskbar() {
  return (
    <footer className="flex h-[72px] shrink-0 items-center border-t-2 border-[#484846] bg-[#262626] pb-[2px] text-white">
      <div className="relative ml-[34px] h-[36px] w-[28px]">
        <Svg w={28} h={36} vb="0 0 28 36">
          <defs>
            <linearGradient id="wid" x1="0" y1="0" x2="0" y2="1">
              <stop stopColor="#4fb9f2" />
              <stop offset="1" stopColor="#1b80c9" />
            </linearGradient>
          </defs>
          <rect width="28" height="36" rx="2.500" fill="url(#wid)" />
          <path d="M3.500 13h6v10h-6zM11.500 19h5v4h-5zM19 15h5.500v8H19z" fill="#0f5ca8" />
          <path d="M4 27h14M20 27h4.500M4 32h20.500" stroke="#fff" strokeWidth="2.500" />
        </Svg>
        <div className="absolute left-[13px] top-[-8px] flex h-[24px] w-[24px] items-center justify-center rounded-full bg-[#ff99a4] text-[16px] text-black">1</div>
      </div>
      <div className="ml-[436px] h-full"><TaskbarApps /></div>
      <Svg w={17} h={10} vb="0 0 17 10" className="ml-[109px]">
        <path d="M1 9l7.500-7.500L16 9" stroke="#fff" strokeWidth="1.900" />
      </Svg>
      <div className="ml-[30px] flex w-[36px] flex-col items-center text-[17px] leading-[23px]">
        <Fit w={35}>ENG</Fit>
        <Fit w={18}>IN</Fit>
      </div>
      <Svg w={24} h={18} vb="0 0 24 18" className="ml-[27px]">
        <path d="M1 6.500a15.500 15.500 0 0 1 22 0M4.300 10a11 11 0 0 1 15.400 0M7.800 13.300a6 6 0 0 1 8.400 0" stroke="#fff" strokeWidth="1.700" />
        <circle cx="12" cy="15.800" r="1.900" fill="#fff" />
      </Svg>
      <Svg w={24} h={20} vb="0 0 24 20" className="ml-[12px]">
        <path d="M1 7h4l5.500-5v16L5 13H1zM13.500 7a4.500 4.500 0 0 1 0 6M16.500 4.500a8 8 0 0 1 0 11" stroke="#fff" strokeWidth="1.600" strokeLinejoin="round" />
        <path d="M19.500 1a12 12 0 0 1 0 18" stroke="#6a6a6a" strokeWidth="1.700" />
      </Svg>
      <Svg w={24} h={20} vb="0 0 24 20" className="mb-[3px] ml-[11px]">
        <path d="M9 3.500h9.500A2.500 2.500 0 0 1 21 6v9.500a2.500 2.500 0 0 1-2.500 2.500H4.500A2.500 2.500 0 0 1 2 15.500v-3" stroke="#fff" strokeWidth="1.700" />
        <path d="M8.500 6.300h9v9H5.500V12zM21.500 8.500H24v4.500h-2.500z" fill="#fff" />
        <path d="M4.500 0L.5 6.800h3L2 12l6-7.500H5.200L7 0z" fill="#fff" />
      </Svg>
      <div className="ml-[25px] flex w-[93px] flex-col items-end text-[17px] leading-6">
        <Fit w={43}>20:36</Fit>
        <Fit w={93}>13-01-2025</Fit>
      </div>
      <Svg w={22} h={24} vb="0 0 22 24" className="ml-[13px]">
        <path d="M10 1.500A7.500 7.500 0 0 0 2.500 9v6L.3 18v1.500h19.200V18l-2-3V9A7.500 7.500 0 0 0 10 1.500zM6.500 21h6.500a3.300 3.300 0 0 1-6.500 0z" fill="#fff" />
        <path d="M7 8.500h5.500L7 14.500h5.500" stroke="#262626" strokeWidth="1.700" />
        <path d="M13 0h9v9h-9z" fill="#262626" />
        <path d="M14.500 2h5.500l-5.500 6H20" stroke="#fff" strokeWidth="1.700" />
      </Svg>
    </footer>
  );
}

export default function App() {
  return (
    <div className="flex h-[1080px] w-[1920px] flex-col overflow-hidden bg-[#efefef] font-['Open_Sans',sans-serif]">
      <div className="flex h-[180px] shrink-0 flex-col gap-[9px] bg-linear-to-b from-[#1f1f1f] via-[#1a1a1a] via-32% to-[#050505] to-52%">
        <TabStrip />
        <div className="flex flex-col">
          <AddressBar />
          <BookmarksBar />
        </div>
      </div>
      <AppHeader />
      <div className="flex min-h-0 flex-1">
        <Sidebar />
        <main className="z-10 flex min-w-0 flex-1 flex-col bg-[#f4f4f4] shadow-[0_0_8px_rgba(0,0,0,0.22)]">
          <DashboardToolbar />
          <Dashboard />
        </main>
      </div>
      <div className="z-20 flex flex-col">
        <Taskbar />
      </div>
    </div>
  );
}
